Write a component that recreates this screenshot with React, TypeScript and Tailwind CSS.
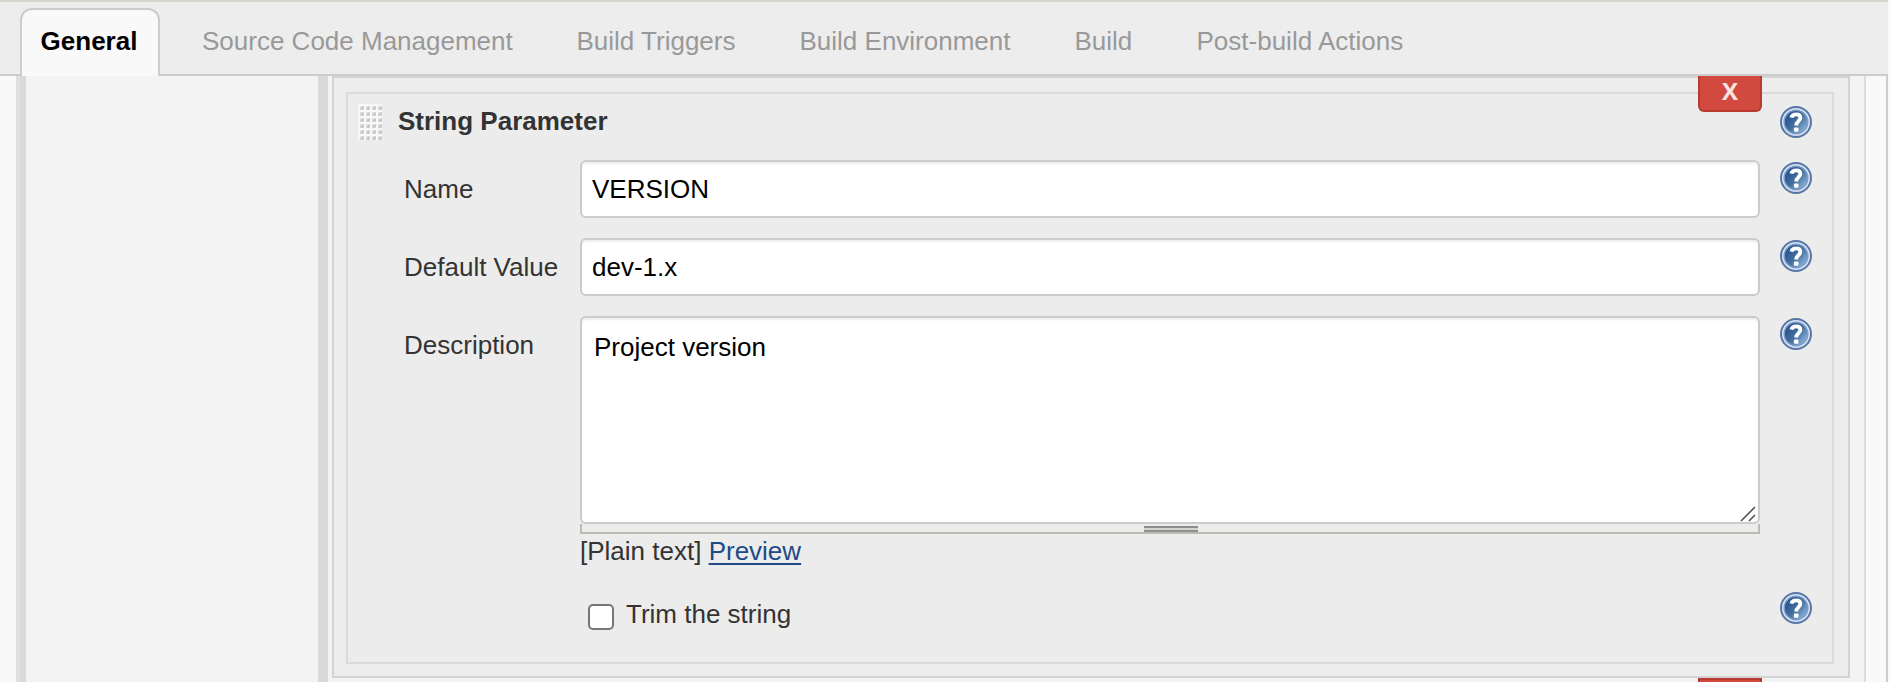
import React, { useId } from "react";

function HelpIcon() {
  const id = useId();
  return (
    <svg viewBox="0 0 32 32" className="block h-8 w-8 shrink-0" role="img" aria-label="Help">
      <defs>
        <linearGradient id={id} x1="0.1" y1="0.2" x2="0.9" y2="0.9">
          <stop offset="0" stopColor="#255290" />
          <stop offset="0.5" stopColor="#44709f" />
          <stop offset="1" stopColor="#93b7df" />
        </linearGradient>
      </defs>
      <circle cx="16" cy="16" r="15" fill="#d6e2f2" stroke="#5876a6" strokeWidth="2" />
      <circle cx="16" cy="16" r="11.8" fill={`url(#${id})`} stroke="#7d9cc8" strokeWidth="1.4" />
      <path d="M11.4 11.6 C12 9.2 13.8 8.4 16.2 8.4 C19 8.4 20.4 9.8 20.4 11.8 C20.4 15 16.2 15.2 16.2 19.4" fill="none" stroke="#fff" strokeWidth="3.8" />
      <rect x="13.9" y="21.4" width="4.6" height="4.4" rx="1" fill="#fff" />
    </svg>
  );
}

function DragHandle() {
  const rows = [0, 6, 12, 18, 24, 30];
  const cols = [0, 6, 12, 18];
  return (
    <svg viewBox="0 0 24 36" className="block h-9 w-6">
      <rect width="24" height="36" fill="#f8f8f8" />
      {rows.map((y) =>
        cols.map((x) => (
          <g key={`${x}-${y}`}>
            <rect x={x + 2} y={y + 2} width="4" height="4" rx="1" fill="#dcdcdc" />
            <path d={`M${x + 2} ${y + 5.6} L${x + 5.6} ${y + 2} V${y + 5.6} Z`} fill="#c2c2c2" />
          </g>
        ))
      )}
    </svg>
  );
}

const tabs = [
  { label: "Source Code Management", width: "w-[310.5px]" },
  { label: "Build Triggers", width: "w-[159px]" },
  { label: "Build Environment", width: "w-[211px]" },
  { label: "Build", width: "w-[58px]" },
  { label: "Post-build Actions", width: "w-[207px]" },
];

function Row({ label, height, children }: { label: string; height: string; children: React.ReactNode }) {
  return (
    <div className={`flex ${height}`}>
      <div className="w-[176px] shrink-0 pt-[14px] whitespace-nowrap">{label}</div>
      <div className="w-[1180px] shrink-0">{children}</div>
      <div className="ml-5 pt-[2px]">
        <HelpIcon />
      </div>
    </div>
  );
}

export default function App() {
  const field =
    "block w-full rounded-[6px] border-2 border-[#ccc] bg-white text-[26px] text-black shadow-[inset_0_2px_2px_rgba(0,0,0,0.07)] outline-none";
  return (
    <div className="flex h-[682px] w-[1890px] flex-col overflow-hidden bg-[#f9f9f9] font-['Liberation_Sans',Arial,sans-serif] text-[26px] leading-[30px] text-[#333]">
      <header className="flex h-[76px] w-[1888px] shrink-0 border-t-2 border-[#d5d5cd] bg-[#ededed] pt-[6px]">
        <div className="w-5 border-b-2 border-[#ccc]" />
        <div className="flex h-[68px] w-[140px] justify-center rounded-t-[12px] border-2 border-b-0 border-[#ccc] bg-[#f9f9f9] pt-[16px] pr-[2px] font-bold text-black">
          General
        </div>
        <nav className="flex flex-1 gap-[64px] border-b-2 border-[#ccc] pt-[18px] pl-[42px] text-[#999]">
          {tabs.map((t) => (
            <span key={t.label} className={`${t.width} shrink-0 whitespace-nowrap`}>
              {t.label}
            </span>
          ))}
        </nav>
      </header>
      <div className="flex h-[606px] w-[1888px] border-r-2 border-[#ccc]">
        <div className="w-4" />
        <div className="w-1 bg-[#dfdfdf]" />
        <div className="w-[6px] bg-[#d9d9d9]" />
        <div className="w-[292px] bg-[#f3f3f3]" />
        <div className="w-[10px] bg-[#d9d9d9]" />
        <main className="flex w-[1538px] flex-col border-r-2 border-[#dcdcdc] bg-[#f3f3f3] pl-1">
          <div className="h-[602px] w-[1518px] shrink-0 border-2 border-[#d3d3d3] bg-[#ededed] px-3 pt-[14px]">
            <section className="relative h-[572px] w-[1488px] border-2 border-[#dadada] bg-[#ececec]">
              <button className="absolute -top-[18px] left-[1350px] flex h-9 w-16 items-start justify-center rounded-b-[6px] border-2 border-t-0 border-[#b93a31] bg-[#d24a3f] font-['Open_Sans',sans-serif] text-[24px] leading-[30px] font-bold text-[#f7e4e2]">
                X
              </button>
              <div className="flex h-[66px] pl-[10px]">
                <div className="pt-[10px]">
                  <DragHandle />
                </div>
                <h2 className="w-[1398px] shrink-0 pt-[12px] pl-4 font-bold">String Parameter</h2>
                <div className="pt-3">
                  <HelpIcon />
                </div>
              </div>
              <div className="pl-14">
                <Row label="Name" height="h-[78px]">
                  <input className={`${field} h-[58px] px-[10px]`} defaultValue="VERSION" />
                </Row>
                <Row label="Default Value" height="h-[78px]">
                  <input className={`${field} h-[58px] px-[10px]`} defaultValue="dev-1.x" />
                </Row>
                <Row label="Description" height="h-[276px]">
                  <textarea className={`${field} h-[208px] resize-none px-3 pt-[14px] leading-[30px]`} defaultValue="Project version" />
                  <div className="relative h-[10px] border-x-2 border-b-2 border-[#bbbbb3]">
                    <div className="absolute top-[2px] left-[562px] h-[6px] w-[54px] border-y-2 border-[#8c8f8c] bg-[#d2d6d2]" />
                    <svg viewBox="0 0 16 16" className="absolute -top-[18px] right-0 h-4 w-4 overflow-visible text-[#555]">
                      <path d="M-1 15 L13 1 M7 15 L13 9" stroke="currentColor" strokeWidth="1.6" fill="none" />
                    </svg>
                  </div>
                  <div className="pt-[2px]">
                    [Plain text] <a className="text-[#204a87] underline decoration-2 underline-offset-[3px]">Preview</a>
                  </div>
                </Row>
                <div className="flex pl-[184px]">
                  <input type="checkbox" className="mt-3 h-[26px] w-[26px] shrink-0 appearance-none rounded-[5px] border-2 border-[#767676] bg-white" />
                  <label className="w-[1166px] shrink-0 pt-[7px] pl-3">Trim the string</label>
                  <HelpIcon />
                </div>
              </div>
            </section>
          </div>
          <div className="ml-[1366px] h-1 w-16 border-2 border-b-0 border-[#b93a31] bg-[#d24a3f]" />
        </main>
      </div>
    </div>
  );
}
